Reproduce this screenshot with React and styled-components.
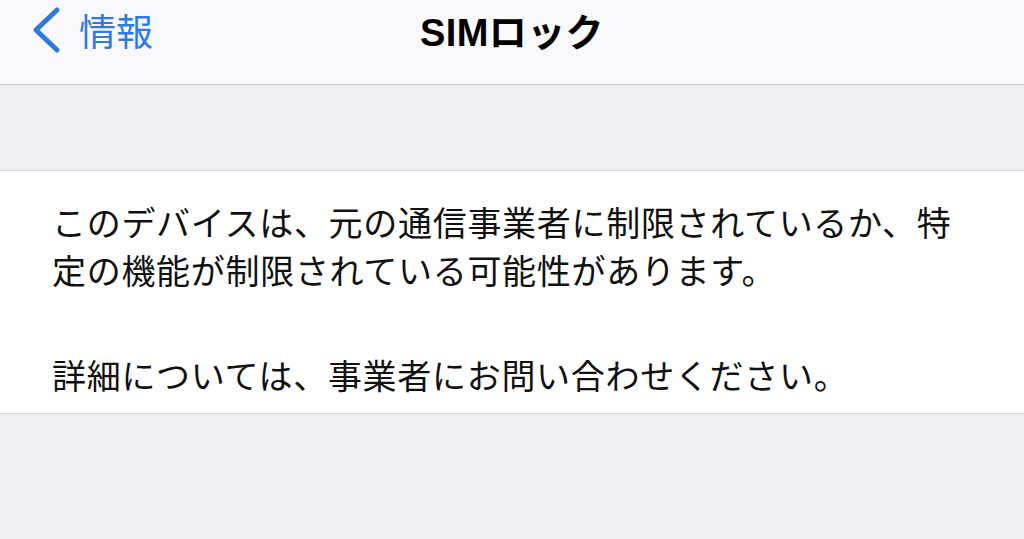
import React from 'react'
import styled, {createGlobalStyle} from 'styled-components'

const GlobalStyle = createGlobalStyle`
  html, body {
    margin: 0;
    padding: 0;
    background: #efeff4;
  }
  body {
    font-family: "Noto Sans CJK JP", "Noto Sans", sans-serif;
    -webkit-font-smoothing: antialiased;
  }
`

const Page = styled.div`
  width: 1024px;
  height: 539px;
  overflow: hidden;
  background: #efeff4;
`

const NavBar = styled.header`
  position: relative;
  height: 84px;
  background: #f9f9fb;
  border-bottom: 1px solid #c8c7cc;
  display: flex;
  align-items: center;
  justify-content: center;
`

const BackButton = styled.button`
  position: absolute;
  left: 31px;
  top: 0;
  height: 60px;
  display: flex;
  align-items: center;
  gap: 18px;
  padding: 0;
  border: 0;
  background: none;
  color: #2d7be0;
  font-family: inherit;
  font-size: 37px;
  cursor: pointer;
`

const NavTitle = styled.h1`
  margin: 0 0 26px;
  font-family: "Liberation Sans", "Noto Sans CJK JP", sans-serif;
  font-size: 38px;
  font-weight: 700;
  color: #000;
  letter-spacing: 0.4px;
`

const Spacer = styled.div`
  height: 85px;
`

const Panel = styled.section`
  background: #fff;
  border-top: 1px solid #d8d8dc;
  border-bottom: 1px solid #d8d8dc;
  padding: 27px 52px 14px 52px;
`

const Paragraph = styled.p`
  margin: 0;
  font-size: 34px;
  line-height: 48px;
  letter-spacing: 0.7px;
  color: #111;

  & + & {
    margin-top: 57px;
  }
`

const Chevron = () => (
  <svg width="30" height="48" viewBox="0 0 30 48" fill="none">
    <path
      d="M26 4 L5 24 L26 44"
      stroke="currentColor"
      strokeWidth="5"
      strokeLinecap="round"
      strokeLinejoin="round"
    />
  </svg>
)

const App = () => (
  <Page>
    <GlobalStyle />
    <NavBar>
      <BackButton>
        <Chevron />
        <span>情報</span>
      </BackButton>
      <NavTitle>SIMロック</NavTitle>
    </NavBar>
    <Spacer />
    <Panel>
      <Paragraph>
        このデバイスは、元の通信事業者に制限されているか、特定の機能が制限されている可能性があります。
      </Paragraph>
      <Paragraph>詳細については、事業者にお問い合わせください。</Paragraph>
    </Panel>
  </Page>
)

export default App
